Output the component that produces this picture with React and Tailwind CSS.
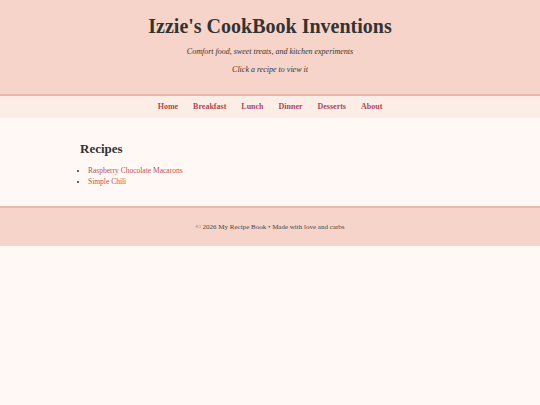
export default function App() {
  const nav = ['Home', 'Breakfast', 'Lunch', 'Dinner', 'Desserts', 'About']
  return (
    <div className="min-h-[405px] bg-[#fff8f4] font-['Liberation_Serif','DejaVu_Serif',serif] text-[#333]">
      <header className="bg-[#f6d4ca] pt-[13px] pb-[19px] text-center border-b-2 border-[#ebb6a9]">
        <h1 className="text-[20px] font-bold leading-[26px]">Izzie's CookBook Inventions</h1>
        <p className="mt-[8px] text-[8px] italic leading-[10px]">Comfort food, sweet treats, and kitchen experiments</p>
        <p className="mt-[8px] text-[8px] italic leading-[10px]">Click a recipe to view it</p>
      </header>
      <nav className="bg-[#fdede7] h-[22px] flex items-center justify-center gap-[15px] text-[8px] font-bold text-[#ad4851]">
        {nav.map(n => <a key={n} href="#">{n}</a>)}
      </nav>
      <main className="mx-auto w-[380px] pt-[23px] pb-[19px]">
        <h2 className="text-[13px] font-bold leading-[16px]">Recipes</h2>
        <ul className="mt-[8px] list-disc pl-[8px] text-[7.5px] leading-[11px] text-[#b7545a] marker:text-[#333]">
          <li><a href="#">Raspberry Chocolate Macarons</a></li>
          <li><a href="#">Simple Chili</a></li>
        </ul>
      </main>
      <footer className="bg-[#f6d4ca] border-t-2 border-[#ebb6a9] h-[40px] flex items-center justify-center text-[7px] text-[#444]">
        © 2026 My Recipe Book • Made with love and carbs
      </footer>
    </div>
  )
}
